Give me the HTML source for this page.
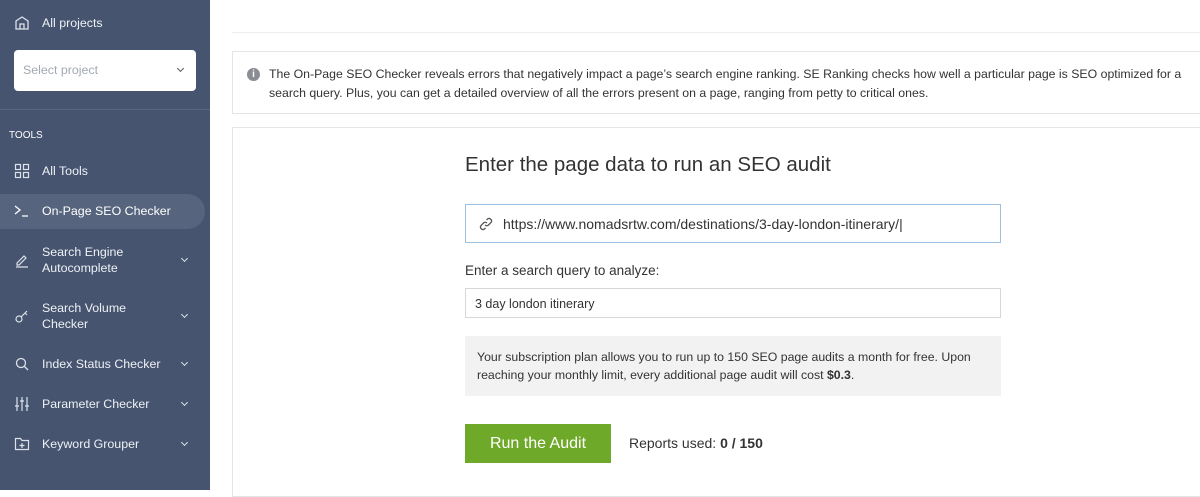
<!DOCTYPE html><html><head><style>
*{box-sizing:border-box;margin:0;padding:0}
body{width:1200px;height:490px;overflow:hidden;background:#fff;font-family:"Liberation Sans",sans-serif;position:relative}
.sb{position:absolute;left:0;top:0;width:210px;height:490px;background:#46546f;color:#eef1f5;font-size:12.4px}
.abs{position:absolute}
.ic{position:absolute;left:14px;width:16px;height:16px}
.t{position:absolute;left:42px;line-height:16px}
.chev{position:absolute;left:182px;width:5px;height:5px;border-right:1.5px solid #dde2ea;border-bottom:1.5px solid #dde2ea;transform:rotate(45deg)}
</style></head><body>
<div class="sb">
 <svg class="ic" style="top:15px" viewBox="0 0 16 16" fill="none" stroke="#dde2ea" stroke-width="1.3"><path d="M2 14V6l6-4 6 4v8zM6 14V9h4v5"/></svg><span class="t" style="top:15px">All projects</span>
 <div class="abs" style="left:14px;top:50px;width:182px;height:41px;background:#fff;border-radius:4px;color:#a3a9b3;font-size:12.4px;line-height:41px;padding-left:9px">Select project<span class="abs" style="left:164px;top:16px;width:5px;height:5px;border-right:1.5px solid #555;border-bottom:1.5px solid #555;transform:rotate(45deg)"></span></div>
 <div class="abs" style="left:0;top:109px;width:210px;height:1px;background:#5a6780"></div>
 <div class="abs" style="left:9px;top:130px;font-size:10px;color:#fff">TOOLS</div>
 <svg class="ic" style="top:163px" viewBox="0 0 16 16" fill="none" stroke="#dde2ea" stroke-width="1.2"><rect x="1.5" y="1.5" width="5" height="5"/><rect x="9.5" y="1.5" width="5" height="5"/><rect x="1.5" y="9.5" width="5" height="5"/><rect x="9.5" y="9.5" width="5" height="5"/></svg><span class="t" style="top:163px">All Tools</span>
 <div class="abs" style="left:0;top:194px;width:205px;height:35px;background:#56647d;border-radius:0 18px 18px 0"></div>
 <svg class="ic" style="top:203px" viewBox="0 0 16 16" fill="none" stroke="#fff" stroke-width="1.3"><path d="M1 3l5 4-5 4M8 13h6"/></svg><span class="t" style="top:203px;color:#fff">On-Page SEO Checker</span>
 <svg class="ic" style="top:252px" viewBox="0 0 16 16" fill="none" stroke="#dde2ea" stroke-width="1.2"><path d="M3 11l7-7 2 2-7 7H3zM2 15h12"/></svg><span class="t" style="top:244px">Search Engine<br>Autocomplete</span><span class="chev" style="top:256px"></span>
 <svg class="ic" style="top:308px" viewBox="0 0 16 16" fill="none" stroke="#dde2ea" stroke-width="1.2"><circle cx="5" cy="11" r="3"/><path d="M7 9l6-6M11 5l2 2"/></svg><span class="t" style="top:300px">Search Volume<br>Checker</span><span class="chev" style="top:312px"></span>
 <svg class="ic" style="top:356px" viewBox="0 0 16 16" fill="none" stroke="#dde2ea" stroke-width="1.3"><circle cx="7" cy="7" r="4.5"/><path d="M10.5 10.5l3.5 3.5"/></svg><span class="t" style="top:356px">Index Status Checker</span><span class="chev" style="top:360px"></span>
 <svg class="ic" style="top:396px" viewBox="0 0 16 16" fill="none" stroke="#dde2ea" stroke-width="1.2"><path d="M3 1v14M8 1v14M13 1v14M1 10h4M6 5h4M11 10h4"/></svg><span class="t" style="top:396px">Parameter Checker</span><span class="chev" style="top:400px"></span>
 <svg class="ic" style="top:436px" viewBox="0 0 16 16" fill="none" stroke="#dde2ea" stroke-width="1.2"><path d="M1.5 2.5h5l1.5 2h6.5v9h-13zM8 7v5M5.5 9.5h5"/></svg><span class="t" style="top:436px">Keyword Grouper</span><span class="chev" style="top:440px"></span>
</div>
<div class="abs" style="left:232px;top:32px;width:968px;height:1px;background:#eceef1"></div>
<div class="abs" style="left:232px;top:51px;width:970px;height:63px;border:1px solid #e3e5e8;font-size:12.3px;color:#333;line-height:19px;padding:13px 0 0 36px;white-space:nowrap">
 <span class="abs" style="left:14px;top:16px;width:13px;height:13px;border-radius:50%;background:#8a8d92;color:#fff;font-size:10px;line-height:13px;text-align:center;font-weight:bold">i</span>
 The On-Page SEO Checker reveals errors that negatively impact a page’s search engine ranking. SE Ranking checks how well a particular page is SEO optimized for a<br>search query. Plus, you can get a detailed overview of all the errors present on a page, ranging from petty to critical ones.</div>
<div class="abs" style="left:232px;top:127px;width:970px;height:370px;border:1px solid #e3e5e8"></div>
<div class="abs" style="left:465px;top:153px;font-size:20.5px;color:#333">Enter the page data to run an SEO audit</div>
<div class="abs" style="left:465px;top:204px;width:536px;height:39px;border:1px solid #9ec1e2;font-size:14px;color:#333;line-height:39px;padding-left:37px">https://www.nomadsrtw.com/destinations/3-day-london-itinerary/|
 <svg class="abs" style="left:13px;top:12px" width="14" height="14" viewBox="0 0 14 14" fill="none" stroke="#555" stroke-width="1.3"><path d="M6 8a2.5 2.5 0 0 0 3.5 0l2.5-2.5a2.5 2.5 0 0 0-3.5-3.5L7.5 3M8 6a2.5 2.5 0 0 0-3.5 0L2 8.5a2.5 2.5 0 0 0 3.5 3.5l1-1"/></svg></div>
<div class="abs" style="left:465px;top:263px;font-size:13.5px;color:#333">Enter a search query to analyze:</div>
<div class="abs" style="left:465px;top:288px;width:536px;height:30px;border:1px solid #d5d7da;font-size:12.5px;color:#333;line-height:30px;padding-left:9px">3 day london itinerary</div>
<div class="abs" style="left:465px;top:336px;width:536px;height:60px;background:#f2f2f3;font-size:12.3px;color:#333;line-height:18px;padding:12px 0 0 12px;white-space:nowrap">Your subscription plan allows you to run up to 150 SEO page audits a month for free. Upon<br>reaching your monthly limit, every additional page audit will cost <b>$0.3</b>.</div>
<div class="abs" style="left:465px;top:424px;width:146px;height:39px;background:#6fa92a;color:#fff;font-size:16px;line-height:39px;text-align:center">Run the Audit</div>
<div class="abs" style="left:629px;top:435px;font-size:14px;color:#333">Reports used: <b>0 / 150</b></div>
</body></html>
